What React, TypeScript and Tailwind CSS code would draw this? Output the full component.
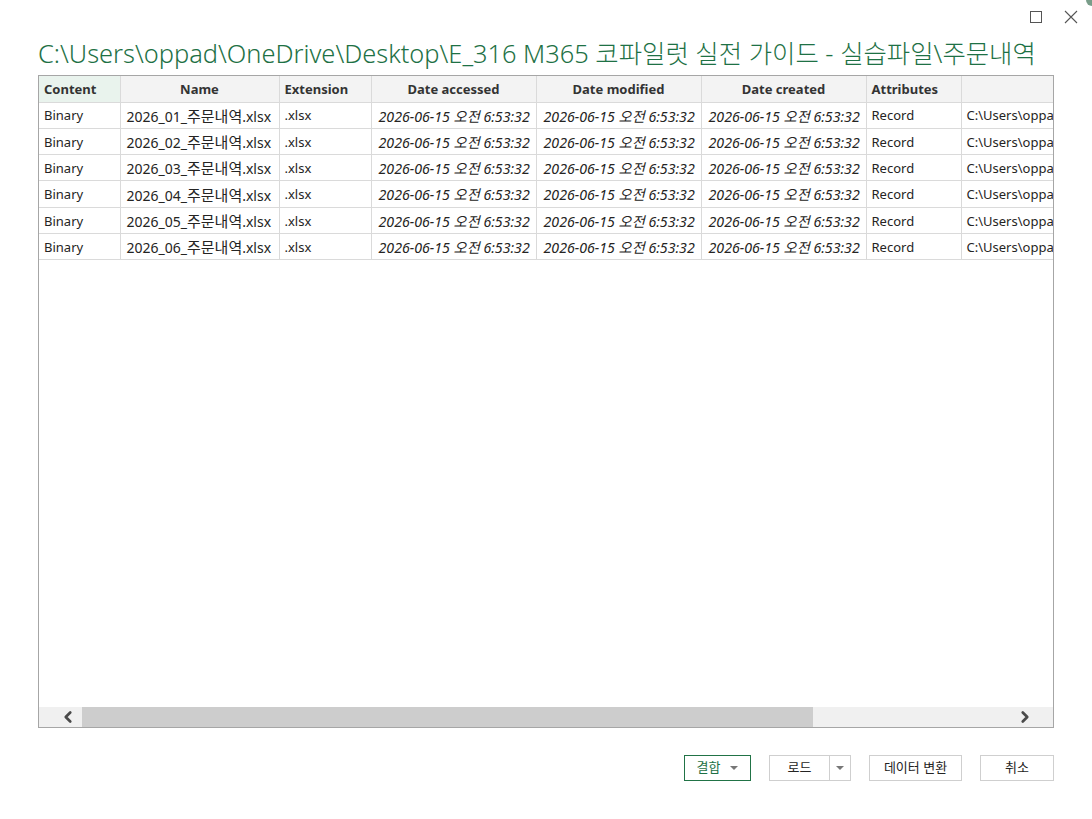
import { ChevronLeft, ChevronRight } from 'lucide-react'

const font = { fontFamily: '"Noto Sans", "Noto Sans CJK KR", sans-serif' }

const cols = [
  { key: 'Content', w: 81, align: 'left' },
  { key: 'Name', w: 159, align: 'center' },
  { key: 'Extension', w: 92, align: 'left' },
  { key: 'Date accessed', w: 165, align: 'center' },
  { key: 'Date modified', w: 165, align: 'center' },
  { key: 'Date created', w: 165, align: 'center' },
  { key: 'Attributes', w: 95, align: 'left' },
  { key: '', w: 140, align: 'left' },
]

const rows = ['01', '02', '03', '04', '05', '06']

function DateCell() {
  return (
    <td className="pl-[7px] pr-[3px] pt-[2px] border-r border-b border-[#dadada] whitespace-nowrap italic text-[14.2px]">
      2026-06-15 오전 6:53:32
    </td>
  )
}

export default function App() {
  return (
    <div className="relative w-[1092px] h-[819px] bg-white overflow-hidden text-[#252423]" style={font}>
      <div className="absolute right-0 top-0 w-[6px] h-[6px] bg-[#1f5b3a] rounded-bl-full opacity-60" />

      <div className="flex justify-end items-center h-[34px] pr-[16px] gap-[22px] text-[#555]">
        <div className="w-[12px] h-[12px] border border-[#555]" />
        <svg width="14" height="14" viewBox="0 0 14 14" className="mr-[-2px]">
          <path d="M1 1 L13 13 M13 1 L1 13" stroke="#555" strokeWidth="1.1" />
        </svg>
      </div>

      <div className="pl-[38px] h-[40px] flex items-center">
        <h1 className="text-[25.4px] font-light text-[#1e7145] leading-none whitespace-nowrap">
          C:\Users\oppad\OneDrive\Desktop\E_316 M365 코파일럿 실전 가이드 - 실습파일\주문내역
        </h1>
      </div>

      <div className="ml-[38px] mt-[1px] w-[1016px] h-[653px] border border-[#a6a6a6] flex flex-col">
        <div className="flex-1 overflow-hidden">
          <table className="table-fixed border-collapse text-[13px]" style={{ width: 1062 }}>
            <colgroup>
              {cols.map((c, i) => (
                <col key={i} style={{ width: c.w }} />
              ))}
            </colgroup>
            <thead>
              <tr className="h-[26px]">
                {cols.map((c, i) => (
                  <th
                    key={i}
                    className={`font-bold text-[#333] px-[5px] pt-[1px] border-r border-b border-[#dadada] ${
                      i === 0 ? 'bg-[#e9f3ed]' : 'bg-[#f3f3f3]'
                    } ${c.align === 'center' ? 'text-center' : 'text-left'}`}
                  >
                    {c.key}
                  </th>
                ))}
              </tr>
            </thead>
            <tbody>
              {rows.map((r) => (
                <tr key={r} className="h-[26.3px]">
                  <td className="px-[5px] pt-[2px] border-r border-b border-[#dadada] whitespace-nowrap">Binary</td>
                  <td className="pl-[6px] pr-[2px] pt-[2px] border-r border-b border-[#dadada] whitespace-nowrap text-[14px]">
                    2026_{r}_<span className="text-[15px]">주문내역</span>.xlsx
                  </td>
                  <td className="px-[5px] pt-[2px] border-r border-b border-[#dadada] whitespace-nowrap">.xlsx</td>
                  <DateCell />
                  <DateCell />
                  <DateCell />
                  <td className="px-[5px] pt-[2px] border-r border-b border-[#dadada] whitespace-nowrap">Record</td>
                  <td className="px-[5px] pt-[2px] border-b border-[#dadada] whitespace-nowrap overflow-hidden">C:\Users\oppad\OneDrive\</td>
                </tr>
              ))}
            </tbody>
          </table>
        </div>
        <div className="h-[20px] bg-[#f0f0f0] flex items-center">
          <div className="w-[43px] flex justify-center">
            <ChevronLeft size={18} strokeWidth={3.6} className="text-[#4a4a4a] ml-[14px]" />
          </div>
          <div className="w-[731px] h-full bg-[#cdcdcd]" />
          <div className="flex-1 flex justify-end pr-[19px]">
            <ChevronRight size={18} strokeWidth={3.6} className="text-[#4a4a4a]" />
          </div>
        </div>
      </div>

      <div className="flex justify-end pr-[38px] mt-[27px] gap-[18px] text-[13px]">
        <button className="h-[26px] w-[67px] border border-[#217346] flex items-center justify-center gap-[10px] text-[#1e7145]">
          <span>결합</span>
          <span className="w-0 h-0 border-l-[4px] border-r-[4px] border-t-[4px] border-l-transparent border-r-transparent border-t-[#777]" />
        </button>
        <div className="h-[26px] w-[82px] border border-[#cfcfcf] flex">
          <span className="flex-1 flex items-center justify-center border-r border-[#cfcfcf]">로드</span>
          <span className="w-[20px] flex items-center justify-center">
            <span className="w-0 h-0 border-l-[4px] border-r-[4px] border-t-[4px] border-l-transparent border-r-transparent border-t-[#777]" />
          </span>
        </div>
        <button className="h-[26px] w-[93px] border border-[#cfcfcf] flex items-center justify-center">데이터 변환</button>
        <button className="h-[26px] w-[74px] border border-[#cfcfcf] flex items-center justify-center">취소</button>
      </div>
    </div>
  )
}
